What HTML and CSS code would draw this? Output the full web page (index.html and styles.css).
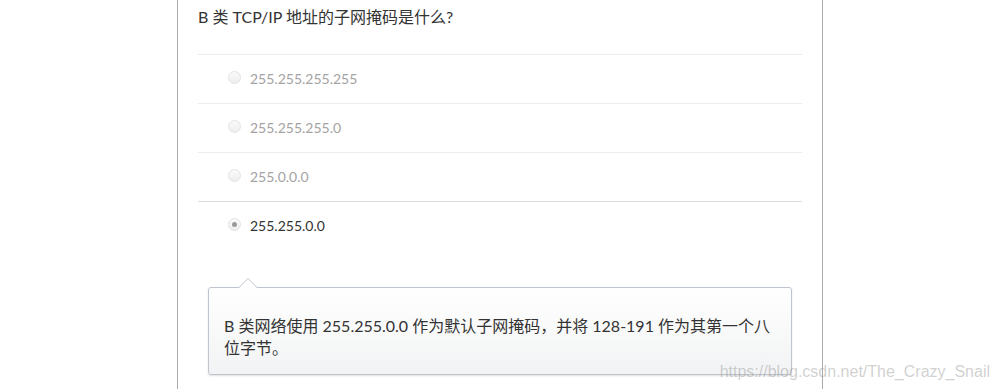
FILE: index.html
```html
<!DOCTYPE html>
<html lang="zh-CN">
<head>
<meta charset="utf-8">
<title>Quiz</title>
<link rel="stylesheet" href="styles.css">
</head>
<body>
<div class="card">
  <div class="question">B 类 TCP/IP 地址的子网掩码是什么?</div>
  <ul class="options">
    <li class="option"><span class="radio"></span><span class="label">255.255.255.255</span></li>
    <li class="option"><span class="radio"></span><span class="label">255.255.255.0</span></li>
    <li class="option"><span class="radio"></span><span class="label">255.0.0.0</span></li>
    <li class="option checked"><span class="radio"></span><span class="label">255.255.0.0</span></li>
  </ul>
  <div class="callout">
    <p class="callout-text">B 类网络使用 255.255.0.0 作为默认子网掩码，并将 128-191 作为其第一个八位字节。</p>
  </div>
</div>
<div class="watermark">https://blog.csdn.net/The_Crazy_Snail</div>
</body>
</html>
```
FILE: styles.css
```css
html, body {
  margin: 0;
  padding: 0;
  background: #fff;
  height: 389px;
  overflow: hidden;
}
body {
  font-family: Lato, "Noto Sans CJK SC", sans-serif;
  color: #333;
  position: relative;
  padding-right: 1px;
}
.card {
  margin: 0 auto;
  border-left: 1px solid #ababab;
  border-right: 1px solid #ababab;
  padding: 0 20px;
  box-sizing: content-box;
  width: 604px;
  min-height: 389px;
}
.question {
  padding-top: 5px;
  font-size: 16px;
  line-height: 24px;
  margin-bottom: 25px;
  color: #333;
}
.options {
  list-style: none;
  margin: 0;
  padding: 0;
}
.option {
  display: flex;
  align-items: center;
  height: 46px;
  padding-bottom: 2px;
  border-top: 1px solid #ececec;
  padding-left: 30px;
  font-size: 14px;
  color: #a3a3a3;
}
.option:last-child {
  border-top-color: #dcdcdc;
}
.option.checked {
  color: #333;
}
.radio {
  width: 11px;
  height: 11px;
  border-radius: 50%;
  border: 1px solid #e3e3e3;
  background: linear-gradient(#fafafa, #eeeeee);
  margin-right: 9px;
  position: relative;
  margin-top: -1px;
}
.option.checked .radio::after {
  content: "";
  position: absolute;
  left: 3px;
  top: 3px;
  width: 5px;
  height: 5px;
  border-radius: 50%;
  background: #9a9a9a;
}
.callout {
  position: relative;
  margin: 37px 10px 0;
  border: 1px solid #bfc5cc;
  border-radius: 3px;
  background: linear-gradient(#ffffff, #f2f3f4);
  box-shadow: 0 1px 2px rgba(0, 0, 0, 0.12);
}
.callout::before {
  content: "";
  position: absolute;
  left: 29px;
  top: -10px;
  width: 0;
  height: 0;
  border-left: 10px solid transparent;
  border-right: 10px solid transparent;
  border-bottom: 10px solid #bfc5cc;
}
.callout::after {
  content: "";
  position: absolute;
  left: 30px;
  top: -9px;
  width: 0;
  height: 0;
  border-left: 9px solid transparent;
  border-right: 9px solid transparent;
  border-bottom: 9px solid #ffffff;
}
.callout-text {
  margin: 0;
  padding: 27px 20px 15px 15px;
  font-size: 16px;
  line-height: 22px;
  color: #333;
}
.watermark {
  position: absolute;
  right: 11px;
  top: 362px;
  font-family: "Liberation Sans", Arial, sans-serif;
  font-size: 16px;
  line-height: 20px;
  color: rgba(150, 150, 150, 0.45);
}
```
